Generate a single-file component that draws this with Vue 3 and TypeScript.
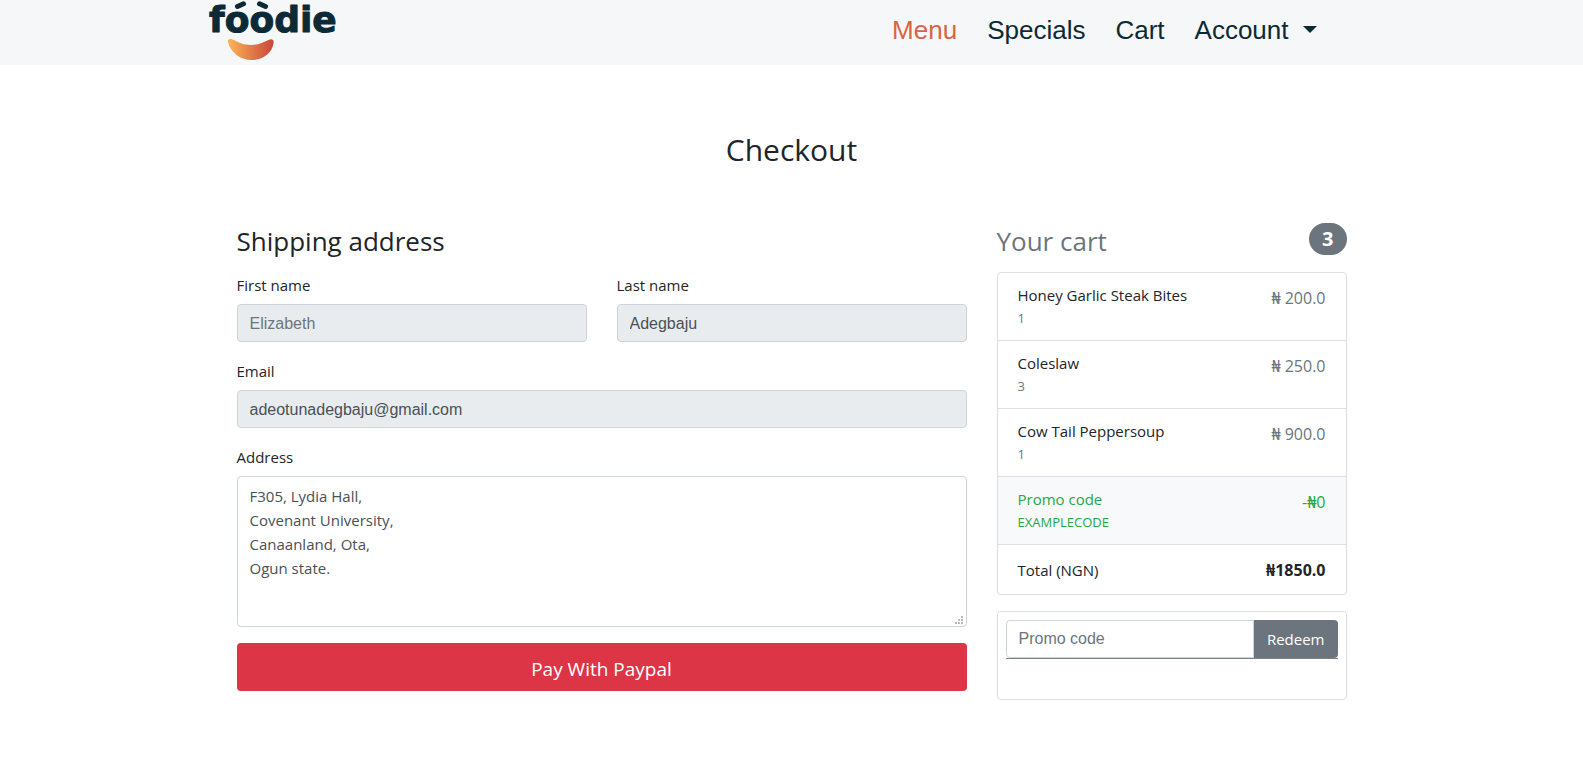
<script setup lang="ts">
import { computed, ref } from 'vue'

interface NavLink {
  label: string
  active: boolean
}

interface CartItem {
  name: string
  quantity: number
  price: number
}

const links: NavLink[] = [
  { label: 'Menu', active: true },
  { label: 'Specials', active: false },
  { label: 'Cart', active: false },
]

const items: CartItem[] = [
  { name: 'Honey Garlic Steak Bites', quantity: 1, price: 200 },
  { name: 'Coleslaw', quantity: 3, price: 250 },
  { name: 'Cow Tail Peppersoup', quantity: 1, price: 900 },
]

const lastName = ref('Adegbaju')
const email = ref('adeotunadegbaju@gmail.com')
const address = ref('F305, Lydia Hall,\nCovenant University,\nCanaanland, Ota,\nOgun state.')
const promo = ref('')

const total = computed(() => items.reduce((sum, item) => sum + item.price * item.quantity, 0))
</script>

<template>
  <div class="page">
    <header class="navbar">
      <div class="navbar-inner">
        <a class="brand" href="#" aria-label="fóòdie">
          <svg width="132" height="65" viewBox="0 0 132 65">
            <defs>
              <linearGradient id="smile" x1="0" x2="1" y1="0" y2="0">
                <stop offset="0" stop-color="#fdb457" />
                <stop offset="1" stop-color="#c9473a" />
              </linearGradient>
            </defs>
            <text class="brand-text" x="2" y="32">foodie</text>
            <path class="brand-accent" d="M30.500 6.500L36.500 3.800" />
            <path class="brand-accent" d="M52.500 3.800L58.500 6.500" />
            <path
              d="M21 42C20.500 39.500 22.500 38.300 25 39.300C33 43 37 45 44 45C51 45 56 42.500 61.500 40C64.500 38.600 67 39.500 66.600 42.500C65.500 53 56 60 44.500 60C32.500 60 23.500 52 21 42Z"
              fill="url(#smile)"
            />
          </svg>
        </a>
        <nav class="nav">
          <a
            v-for="link in links"
            :key="link.label"
            class="nav-link"
            :class="{ active: link.active }"
            href="#"
          >{{ link.label }}</a>
          <button class="nav-link dropdown" type="button" aria-haspopup="true">
            Account
            <span class="caret"></span>
          </button>
        </nav>
      </div>
    </header>

    <main class="container">
      <h1 class="title">Checkout</h1>

      <div class="columns">
        <section>
          <h2 class="heading">Shipping address</h2>
          <form @submit.prevent>
            <div class="name-row">
              <div class="field">
                <label for="first-name">First name</label>
                <input id="first-name" class="control" type="text" placeholder="Elizabeth" readonly />
              </div>
              <div class="field">
                <label for="last-name">Last name</label>
                <input id="last-name" v-model="lastName" class="control" type="text" readonly />
              </div>
            </div>
            <div class="field">
              <label for="email">Email</label>
              <input id="email" v-model="email" class="control" type="email" readonly />
            </div>
            <div class="field">
              <label for="address">Address</label>
              <textarea id="address" v-model="address" class="control area" spellcheck="false"></textarea>
            </div>
            <button class="pay" type="submit">Pay With Paypal</button>
          </form>
        </section>

        <aside>
          <h2 class="heading cart-heading">
            <span>Your cart</span>
            <span class="badge">{{ items.length }}</span>
          </h2>
          <ul class="cart">
            <li v-for="item in items" :key="item.name" class="cart-row">
              <div>
                <h3 class="item-name">{{ item.name }}</h3>
                <small class="item-note">{{ item.quantity }}</small>
              </div>
              <span class="price">₦ {{ item.price.toFixed(1) }}</span>
            </li>
            <li class="cart-row discount">
              <div>
                <h3 class="item-name">Promo code</h3>
                <small class="item-note">EXAMPLECODE</small>
              </div>
              <span class="price">-₦0</span>
            </li>
            <li class="cart-row total">
              <span>Total (NGN)</span>
              <strong class="total-sum">₦{{ total.toFixed(1) }}</strong>
            </li>
          </ul>
          <form class="promo-card" @submit.prevent>
            <div class="promo-group">
              <input
                v-model="promo"
                class="control promo-input"
                type="text"
                placeholder="Promo code"
                aria-label="Promo code"
              />
              <button class="redeem" type="submit">Redeem</button>
            </div>
          </form>
        </aside>
      </div>
    </main>
  </div>
</template>

<style>
body {
  margin: 0;
  background: #fff;
}
</style>

<style scoped>
* {
  box-sizing: border-box;
}

.page {
  color: #212529;
  font-family: 'Open Sans', 'Noto Sans', sans-serif;
  font-size: 15px;
  line-height: 24px;
}

.navbar {
  background: #f5f7f9;
}

.navbar-inner {
  display: flex;
  align-items: center;
  justify-content: space-between;
  max-width: 1170px;
  margin: 0 auto;
  padding-right: 60px;
}

.brand,
.brand svg {
  display: block;
}

.brand-text {
  fill: #0b2a35;
  stroke: #0b2a35;
  stroke-width: 1px;
  stroke-linejoin: round;
  font-family: 'DejaVu Sans', sans-serif;
  font-size: 36px;
  font-weight: 700;
}

.brand-accent {
  fill: none;
  stroke: #0b2a35;
  stroke-width: 5px;
  stroke-linecap: round;
}

.nav {
  display: flex;
  align-items: center;
  gap: 30px;
  padding-bottom: 6px;
}

.nav-link {
  display: flex;
  align-items: center;
  gap: 14px;
  padding: 0;
  border: 0;
  background: none;
  color: #0b2a35;
  font-family: 'Liberation Sans', Arial, sans-serif;
  font-size: 26px;
  line-height: 38px;
  text-decoration: none;
  cursor: pointer;
}

.nav-link.active {
  color: #d96444;
}

.caret {
  border-top: 7px solid;
  border-right: 7px solid transparent;
  border-left: 7px solid transparent;
}

.container {
  max-width: 1140px;
  margin: 0 auto;
  padding: 66px 15px 72px;
}

.title {
  margin: 0 0 54px;
  font-size: 30px;
  font-weight: 400;
  line-height: 38px;
  text-align: center;
}

.columns {
  display: grid;
  grid-template-columns: minmax(0, 730fr) minmax(0, 350fr);
  align-items: start;
  gap: 30px;
}

.heading {
  margin: 0 0 12px;
  font-size: 26px;
  font-weight: 400;
  line-height: 37px;
}

.name-row {
  display: grid;
  grid-template-columns: 1fr 1fr;
  gap: 30px;
}

.field {
  margin-bottom: 16px;
}

.field label {
  display: block;
  padding-top: 1px;
  margin-bottom: 7px;
}

.control {
  display: block;
  width: 100%;
  height: 38px;
  padding: 7px 12px 5px;
  border: 1px solid #ced4da;
  border-radius: 4px;
  background: #fff;
  color: #495057;
  font-family: 'Liberation Sans', Arial, sans-serif;
  font-size: 16px;
  line-height: 24px;
  outline: none;
}

.control::placeholder {
  color: #6c757d;
  opacity: 1;
}

.control:read-only {
  background: #e9ecef;
}

.area {
  height: 151px;
  font-family: 'Open Sans', 'Noto Sans', sans-serif;
  font-size: 15px;
  resize: vertical;
}

.area::-webkit-resizer {
  background:
    linear-gradient(#b9b9b9, #b9b9b9) 10px 5px / 2px 2px no-repeat,
    linear-gradient(#b9b9b9, #b9b9b9) 7px 8px / 2px 2px no-repeat,
    linear-gradient(#b9b9b9, #b9b9b9) 10px 8px / 2px 2px no-repeat,
    linear-gradient(#b9b9b9, #b9b9b9) 4px 11px / 2px 2px no-repeat,
    linear-gradient(#b9b9b9, #b9b9b9) 7px 11px / 2px 2px no-repeat,
    linear-gradient(#b9b9b9, #b9b9b9) 10px 11px / 2px 2px no-repeat;
}

.pay {
  display: block;
  width: 100%;
  padding: 12px 16px 8px;
  border: 0;
  border-radius: 4px;
  background: #dc3545;
  color: #fff;
  font-family: inherit;
  font-size: 19px;
  line-height: 28px;
  cursor: pointer;
}

.cart-heading {
  display: flex;
  align-items: flex-start;
  justify-content: space-between;
  color: #6c757d;
}

.badge {
  padding: 0 13px;
  border-radius: 16px;
  background: #6c757d;
  color: #fff;
  font-size: 20px;
  font-weight: 700;
  line-height: 32px;
}

.cart {
  margin: 0 0 16px;
  padding: 0;
  border: 1px solid #dfdfdf;
  border-radius: 4px;
  list-style: none;
}

.cart-row {
  display: flex;
  justify-content: space-between;
  padding: 12px 20px 10px;
}

.cart-row + .cart-row {
  border-top: 1px solid #dfdfdf;
}

.item-name {
  margin: 0;
  font-size: 15px;
  font-weight: 400;
  line-height: 20px;
}

.item-note {
  display: block;
  padding-top: 2px;
  color: #6c757d;
  font-size: 13px;
  line-height: 23px;
}

.price {
  padding-top: 1px;
  color: #6c757d;
  font-size: 16px;
}

.cart-row.total {
  padding: 13px 20px 12px;
}

.total-sum {
  font-size: 16px;
}

.discount {
  background: #f8f9fa;
}

.discount,
.discount .item-note,
.discount .price {
  color: #28a745;
}

.promo-card {
  padding: 8px 8px 40px;
  border: 1px solid #dfdfdf;
  border-radius: 4px;
}

.promo-group {
  display: flex;
  border-bottom: 1px solid #808080;
}

.promo-input {
  flex: 1;
  min-width: 0;
  padding: 6px 12px;
  border-top-right-radius: 0;
  border-bottom-right-radius: 0;
}

.redeem {
  padding: 7px 13px;
  border: 0;
  border-radius: 0 4px 4px 0;
  background: #6c757d;
  color: #fff;
  font-family: inherit;
  font-size: 15px;
  line-height: 24px;
  cursor: pointer;
}
</style>
